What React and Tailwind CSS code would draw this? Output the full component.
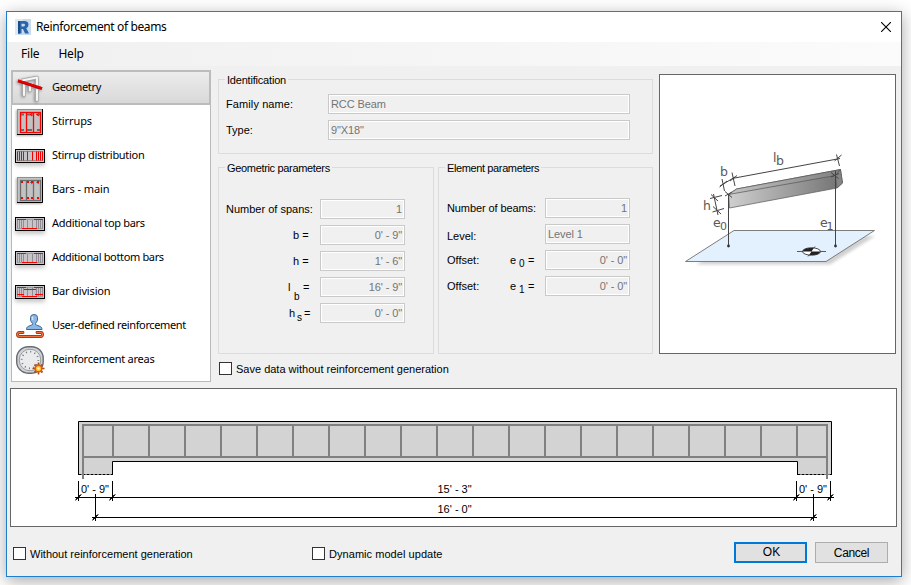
import React from "react";

const BAY_LINES = Array.from({ length: 20 }, (_, i) => 113 + i * 36);

/* ---------- sidebar icons ---------- */

function GeometryIcon() {
  return (
    <svg width="30" height="30" viewBox="0 0 30 30" fill="none" className="drop-shadow-[-1px_1px_1.500px_rgba(0,0,0,0.4)]">
      <g strokeLinecap="round">
        <path d="M7 7.500 22 4.500M9 12V22M22 6V12M15 12V17.500M22 17V27" stroke="#a2a2a2" strokeWidth="3.400" />
        <path d="M7 7.500 22 4.500M9 12V22M22 6V12M15 12V17.500M22 17V27" stroke="#f6f6f6" strokeWidth="2.200" />
      </g>
      <path d="M3 7.800 27 15.600" stroke="#a80000" strokeWidth="2.800" />
      <path d="M3 7.500 27 15.300" stroke="#e80000" strokeWidth="2.200" />
    </svg>
  );
}

function SectionIcon({ main }) {
  const frame = main ? "#6e6e6e" : "#ff0000";
  return (
    <svg width="30" height="30" viewBox="0 0 30 30" className="drop-shadow-[-1px_1px_1px_rgba(0,0,0,0.3)]">
      <rect x="2" y="2" width="26" height="26" fill="#8f8f8f" />
      <path d="M27.500 2V27.500H2" fill="none" stroke="#000" />
      <rect x="3" y="3" width="24" height="24" fill="#c2c2c2" />
      {!main && <path d="M6 7.500h3M12 7.500h5M22 7.500h3M6 23h3M12 23h5M22 23h3" stroke="#6b6b6b" strokeWidth="2" />}
      <g fill="none" stroke={frame} strokeWidth="1.300">
        <rect x="5.500" y="5.500" width="20" height="20" />
        <path d="M11.500 5.500V25M18.500 5.500V25" />
        <path d="M15 8 18 5.500M16 9 19 7M22 8 25 5.500M21 7 24 9" strokeWidth="1" />
      </g>
      {main && (
        <g fill="#ff0000">
          {[7, 13, 17, 23].map((x) => (
            <g key={x}>
              <rect x={x - 1} y="6" width="2" height="2" />
              <rect x={x - 1} y="22" width="2" height="2" />
            </g>
          ))}
        </g>
      )}
    </svg>
  );
}

function BeamIcon({ kind }) {
  const dist = kind === "distribution";
  const lines = [2.5, 4.5, 6.5, 8.5, 12.5, 17.5, 21.5, 23.5, 25.5, 27.5];
  return (
    <svg width="30" height="14" viewBox="0 0 30 14" className="drop-shadow-[0_3px_2px_rgba(0,0,0,0.22)]">
      <rect x=".5" y=".5" width="29" height="13" fill="#c6c4c6" stroke="#000" />
      <path d="M2 2.500H28M2 11.500H28" stroke={dist ? "#9b8a8a" : "#a49ca4"} />
      {lines.map((x) => (
        <path key={x} d={`M${x} 2.500V11.500`} stroke={dist ? "#f00000" : "#938b93"} />
      ))}
      {kind === "top" && <path d="M2 2.500H11M19 2.500H28M7 11.500H22" stroke="#f00" />}
      {kind === "bottom" && <path d="M2 2.500H11M19 2.500H28M7 11.500H22" stroke="#f00" />}
      {kind === "division" && <path d="M2 2.500H11M19 2.500H28M9 4.500H21M2 9.500H9M20 9.500H28M7 11.500H22" stroke="#f00" />}
    </svg>
  );
}

function UserIcon() {
  return (
    <svg width="30" height="30" viewBox="0 0 30 30">
      <path d="M11.500 18.500C11.500 15 14 15.500 17.500 13.500V12.500L15.500 9.500V6.500Q15.500 3.500 19 3.500T22.500 6.500V9.500L20.500 12.500V13.500C24 15.500 27 15 27 18.500Z" fill="#8ab8e6" stroke="#41668c" />
      <path d="M17.500 5.500V9" stroke="#d3e6f9" strokeWidth="1.500" />
      <path d="M8 21.500H4.500Q2.500 21.500 2.500 23.500T4.500 25.500H25.500Q27.500 25.500 27.500 23.500T25.500 21.500H22" fill="none" stroke="#8f2a10" strokeWidth="2.800" strokeLinecap="round" />
      <path d="M8 21.500H4.500Q2.500 21.500 2.500 23.500T4.500 25.500H25.500Q27.500 25.500 27.500 23.500T25.500 21.500H22" fill="none" stroke="#f2703a" strokeWidth="1.300" strokeLinecap="round" />
    </svg>
  );
}

function AreasIcon() {
  return (
    <svg width="30" height="30" viewBox="0 0 30 30">
      <rect x="1.700" y="1.700" width="26.500" height="26.500" rx="11.500" fill="#cfd3d7" stroke="#686c71" strokeWidth="1.400" />
      <circle cx="15" cy="15" r="10.800" fill="#e9ebed" stroke="#989ca1" />
      <circle cx="15" cy="15" r="8.300" fill="none" stroke="#74787c" strokeWidth="1.800" strokeDasharray="1 3.345" />
      <path d="M23.500 17.500v12M17.500 23.500h12" stroke="#a4501c" strokeWidth="1.600" />
      <path d="M19.500 19.500l8 8M27.500 19.500l-8 8" stroke="#b5481c" strokeWidth="1.800" />
      <circle cx="23.500" cy="23.500" r="3.300" fill="#ffc31f" stroke="#e8531a" strokeWidth="1.400" />
      <circle cx="23.500" cy="23.500" r="1.300" fill="#fff3a8" />
    </svg>
  );
}

const NAV = [
  { label: "Geometry", icon: <GeometryIcon />, track: "tracking-[-0.3px]" },
  { label: "Stirrups", icon: <SectionIcon />, track: "tracking-[-0.1px]" },
  { label: "Stirrup distribution", icon: <BeamIcon kind="distribution" />, track: "tracking-[-0.3px]" },
  { label: "Bars - main", icon: <SectionIcon main />, track: "tracking-[-0.1px]" },
  { label: "Additional top bars", icon: <BeamIcon kind="top" />, track: "tracking-[-0.3px]" },
  { label: "Additional bottom bars", icon: <BeamIcon kind="bottom" />, track: "tracking-[-0.35px]" },
  { label: "Bar division", icon: <BeamIcon kind="division" />, track: "tracking-[-0.15px]" },
  { label: "User-defined reinforcement", icon: <UserIcon />, track: "tracking-[-0.37px]" },
  { label: "Reinforcement areas", icon: <AreasIcon />, track: "tracking-[-0.25px]" },
];

function Sidebar() {
  return (
    <nav className="h-[312px] w-[200px] border border-[#b9b9b9] bg-white font-['Noto_Sans','Open_Sans',sans-serif] text-[11px]">
      {NAV.map((item, i) => (
        <div
          key={item.label}
          className={
            i === 0
              ? "-mx-px -mt-px mb-0 flex h-[35px] items-center border-2 border-[#bcbcbc] bg-linear-to-b from-[#ececec] to-[#d9d9d9] pl-px"
              : "flex h-[34px] items-center pl-[2px]"
          }
        >
          <span className="flex w-[32px] items-center justify-center">{item.icon}</span>
          <span className={`ml-[6px] pb-[2px] whitespace-nowrap leading-4 ${item.track}`}>{item.label}</span>
        </div>
      ))}
    </nav>
  );
}

/* ---------- form pieces ---------- */

function Field({ value, className = "", left }) {
  return (
    <div
      className={`h-[20px] shrink-0 border border-[#c9c9c9] px-[2px] leading-[19px] tracking-[-0.1px] text-[#747474] shadow-[inset_0_0_0_1px_#fff] ${left ? "" : "text-right"} ${className}`}
    >
      {value}
    </div>
  );
}

function Group({ title, track, className, children }) {
  return (
    <fieldset className={`border border-[#dcdcdc] ${className}`}>
      <legend className={`ml-[6px] h-[13px] px-[2px] leading-[15px] ${track}`}>{title}</legend>
      {children}
    </fieldset>
  );
}

function Check({ label, track }) {
  return (
    <label className="flex items-center whitespace-nowrap">
      <span className="size-[13px] border border-[#333] bg-white" />
      <span className={`ml-1 h-[13px] leading-[14px] ${track}`}>{label}</span>
    </label>
  );
}

function Identification() {
  return (
    <Group title="Identification" track="tracking-[-0.2px]" className="h-[81px] w-[435px]">
      <div className="flex flex-col gap-[6px] pt-[8px] pl-[7px]">
        <div className="flex items-center">
          <span className="w-[102px] tracking-[0.1px]">Family name:</span>
          <Field left value="RCC Beam" className="w-[302px]" />
        </div>
        <div className="flex items-center">
          <span className="w-[102px]">Type:</span>
          <Field left value={'9"X18"'} className="w-[302px]" />
        </div>
      </div>
    </Group>
  );
}

function GeometricParameters() {
  return (
    <Group title="Geometric parameters" track="tracking-[-0.33px]" className="h-[193px] w-[216px]">
      <div className="flex flex-col gap-[6px] pt-[25px] pl-[7px]">
        <div className="flex items-center">
          <span className="w-[94px] whitespace-nowrap">Number of spans:</span>
          <Field value="1" className="w-[85px]" />
        </div>
        <div className="flex items-center">
          <span className="w-[94px] pl-[67px]">b =</span>
          <Field value={"0' - 9\""} className="w-[85px]" />
        </div>
        <div className="flex items-center">
          <span className="w-[94px] pl-[67px]">h =</span>
          <Field value={"1' - 6\""} className="w-[85px]" />
        </div>
        <div className="flex items-center">
          <span className="flex h-[20px] w-[94px] pl-[62px] leading-[20px]">
            <span className="w-[6px]">l</span>
            <span className="w-[9px] pt-[10px] text-[10px]">b</span>
            <span>=</span>
          </span>
          <Field value={"16' - 9\""} className="w-[85px]" />
        </div>
        <div className="flex items-center">
          <span className="flex h-[20px] w-[94px] pl-[63px] leading-[20px]">
            <span className="w-[8px]">h</span>
            <span className="w-[7px] pt-[5px] text-[10px]">s</span>
            <span>=</span>
          </span>
          <Field value={"0' - 0\""} className="w-[85px]" />
        </div>
      </div>
    </Group>
  );
}

function OffsetRow({ sub }) {
  return (
    <div className="flex h-[20px]">
      <span className="flex h-[20px] w-[98px] leading-[20px]">
        <span className="w-[63px]">Offset:</span>
        <span className="w-[9px]">e</span>
        <span className="w-[9px] pt-[4px] text-[10px]">{sub}</span>
        <span>=</span>
      </span>
      <Field value={"0' - 0\""} className="w-[85px]" />
    </div>
  );
}

function ElementParameters() {
  return (
    <Group title="Element parameters" track="tracking-[-0.38px]" className="h-[193px] w-[215px]">
      <div className="flex flex-col gap-[6px] pt-[24px] pl-[8px]">
        <div className="flex items-center">
          <span className="w-[98px] whitespace-nowrap tracking-[-0.1px]">Number of beams:</span>
          <Field value="1" className="w-[85px]" />
        </div>
        <div className="flex h-[20px]">
          <span className="w-[98px] pt-[2px] leading-[20px]">Level:</span>
          <Field left value="Level 1" className="w-[85px]" />
        </div>
        <OffsetRow sub="0" />
        <OffsetRow sub="1" />
      </div>
    </Group>
  );
}

/* ---------- drawings ---------- */

function Preview() {
  return (
    <div className="h-[280px] w-[237px] border border-[#666] bg-white">
      <svg width="235" height="278" viewBox="660 75 235 278">
        <defs>
          <linearGradient id="front" x1="0" y1="0" x2="1" y2="0">
            <stop offset="0" stopColor="#cfcfcf" />
            <stop offset="1" stopColor="#727272" />
          </linearGradient>
          <linearGradient id="top" x1="0" y1="0" x2="1" y2="0">
            <stop offset="0" stopColor="#c4c4c4" />
            <stop offset="1" stopColor="#808080" />
          </linearGradient>
          <filter id="soft" x="-10%" y="-30%" width="120%" height="160%">
            <feGaussianBlur stdDeviation="1.500" />
          </filter>
        </defs>
        <path d="M696 264.500 742 236H875L830 264.500Z" fill="#000" opacity=".18" filter="url(#soft)" />
        <path d="M685.500 261.500 734 230.500H874.500L826 261.500Z" fill="#e3f1ff" stroke="#7c7c7c" />
        <path d="M728.500 194.500 736.500 189 840.500 169.500 842.500 183 837 188 729.500 208Z" fill="url(#front)" stroke="#666" strokeWidth=".8" />
        <path d="M728.500 194.500 736.500 189 840.500 169.500 835.500 175.500Z" fill="url(#top)" stroke="#555" strokeWidth=".7" />
        <path d="M840.500 169.500 842.500 183 837 188 835.500 175.500Z" fill="#858585" stroke="#555" strokeWidth=".6" />
        <g stroke="#444" fill="none" strokeWidth="1">
          <path d="M728.500 194V246M835.500 171V246" />
          <path d="M732 178.500 840 158.500M720 186 735 177" />
          <path d="M732 172.500 735 186M836.500 154.500 839.500 166M722 179 724.500 191" />
          <path d="M730 181 737 175.500M834.500 161 841.500 155M719.500 187 727 181" />
          <path d="M713.500 194 718 215M710 198.500 722 195.500M712.500 212 724 208.500" />
          <path d="M711 194.500 718 201M713 206.500 721 214" />
          <path d="M725 191.500 732 197.500M725 196 732 192M831 172.500 838.500 178.500M831 177 839 173.500" />
        </g>
        <circle cx="728.500" cy="246" r="1.400" fill="#333" />
        <circle cx="835.500" cy="246" r="1.400" fill="#333" />
        <path d="M797 251.500H826M808 256.500 815 246.500" stroke="#333" strokeWidth=".8" />
        <ellipse cx="811.500" cy="251.500" rx="9" ry="3.700" fill="#fff" stroke="#333" strokeWidth=".9" />
        <path d="M811.500 251.500 802.500 251.500Q803 248 814 247.800ZM811.500 251.500 820.500 251.500Q820 255 809 255.200Z" fill="#222" />
        <g fill="#595959" className="font-['DejaVu_Sans',sans-serif] text-[12.500px]">
          <text x="720" y="176">b</text>
          <text x="773" y="162">l</text>
          <text x="776" y="165">b</text>
          <text x="703" y="210">h</text>
          <text x="713" y="227">e</text>
          <text x="720" y="230" className="text-[11px]">0</text>
          <text x="820" y="227">e</text>
          <text x="826.500" y="230" className="text-[11px]">1</text>
        </g>
      </svg>
    </div>
  );
}

function Slash({ x, y }) {
  return <path d={`M${x - 3} ${y + 3}L${x + 3} ${y - 3}M${x - 3} ${y + 2}L${x + 2} ${y - 3}`} stroke="#000" strokeWidth=".9" />;
}

function Elevation() {
  return (
    <div className="h-[139px] w-[887px] border border-[#666] bg-white">
      <svg width="885" height="137" viewBox="11 389 885 137">
        <path d="M78.500 474.500V421.500H831.500V474.500H797.500V461.500H112.500V474.500Z" fill="#d3d3d3" />
        <path d="M78.500 475V421.500H831.500V475M797.500 475V461.500H112.500V475" fill="none" stroke="#000" />
        <path d="M78.500 474.500H112.500M797.500 474.500H831.500" stroke="#000" strokeDasharray="3 1" />
        <g stroke="#808080" strokeWidth="2" fill="none">
          <path d="M83 479V425H827V479M83 457H827" />
          {BAY_LINES.map((x) => (
            <path key={x} d={`M${x} 425V457`} />
          ))}
        </g>
        <g stroke="#000" fill="none">
          <path d="M75 497.500H834M92 517.500H817" />
          <path d="M78.500 481V501M112.500 481V501M796.500 481V501M830.500 481V501" />
          <path d="M95.500 494V521M813.500 494V521" />
        </g>
        {[78.5, 112.5, 796.5, 830.5].map((x) => (
          <Slash key={x} x={x} y={497.5} />
        ))}
        <Slash x={95.5} y={517.5} />
        <Slash x={813.5} y={517.5} />
        <g className="font-['Liberation_Sans',sans-serif] text-[11px]">
          <text x="81" y="493">0' - 9"</text>
          <text x="799" y="493">0' - 9"</text>
          <text x="437.500" y="493">15' - 3"</text>
          <text x="437.500" y="513">16' - 0"</text>
        </g>
      </svg>
    </div>
  );
}

/* ---------- window ---------- */

function TitleBar() {
  return (
    <header className="flex h-[30px] items-center bg-white pr-[10px] pl-[8px]">
      <svg width="16" height="16" viewBox="0 0 16 16">
        <rect width="16" height="16" fill="#c7dbee" />
        <path d="M0 0H8L3 16H0Z" fill="#dce9f5" />
        <path d="M3 2H9.500Q13.500 2 13.500 5.700 13.500 8.300 11.300 9.300L14 14.500H10L8 10H6.500V14.500H3ZM6.500 4.800V7.400H8.700Q10 7.400 10 6.100T8.700 4.800Z" fill="#2b66a9" fillRule="evenodd" />
        <path d="M3 2H5V14.500H3Z" fill="#1d4c84" />
      </svg>
      <h1 className="ml-[5px] font-['Noto_Sans','Open_Sans',sans-serif] text-[12px] leading-4 tracking-[-0.37px]">Reinforcement of beams</h1>
      <svg className="ml-auto" width="10" height="10" viewBox="0 0 10 10">
        <path d="M0 0 10 10M10 0 0 10" stroke="#000" strokeWidth="1.100" />
      </svg>
    </header>
  );
}

export default function App() {
  return (
    <div className="h-[585px] w-[911px] overflow-hidden bg-white pt-[11px] pl-[6px] font-['Liberation_Sans',Arial,sans-serif] text-[11px] leading-[13px] text-black">
      <main className="h-[566px] w-[896px] border border-[#1e7fd0] bg-[#f0f0f0] shadow-[0_4px_16px_rgba(0,0,0,0.35)]">
        <TitleBar />
        <div className="flex h-[24px] items-center gap-[19px] bg-linear-to-r from-[#f0f0f0] to-[#fbfbfb] pb-px pl-[14px] font-['Noto_Sans','Open_Sans',sans-serif] text-[12px] tracking-[-0.2px]">
          <span>File</span>
          <span>Help</span>
        </div>
        <div className="flex h-[316px] pt-[4px] pl-[4px]">
          <Sidebar />
          <div className="ml-[7px] w-[435px] pt-[3px]">
            <Identification />
            <div className="mt-[7px] flex gap-[4px]">
              <GeometricParameters />
              <ElementParameters />
            </div>
            <div className="mt-[8px] pl-px">
              <Check label="Save data without reinforcement generation" track="tracking-[0px]" />
            </div>
          </div>
          <div className="ml-[6px] pt-[4px]">
            <Preview />
          </div>
        </div>
        <div className="mt-[6px] pl-[3px]">
          <Elevation />
        </div>
        <footer className="mt-[15px] flex h-[21px] items-center pl-[6px]">
          <div className="w-[299px] pt-px">
            <Check label="Without reinforcement generation" track="tracking-[0px]" />
          </div>
          <div className="w-[422px] pt-px">
            <Check label="Dynamic model update" track="tracking-[0.05px]" />
          </div>
          <button className="h-[21px] w-[73px] border-2 border-[#0078d7] bg-[#e1e1e1] pb-px pl-[2px] text-[12px] leading-[16px]">OK</button>
          <button className="ml-[8px] h-[21px] w-[73px] border border-[#adadad] bg-[#e1e1e1] text-[12px] leading-[18px] tracking-[-0.35px]">Cancel</button>
        </footer>
      </main>
    </div>
  );
}
